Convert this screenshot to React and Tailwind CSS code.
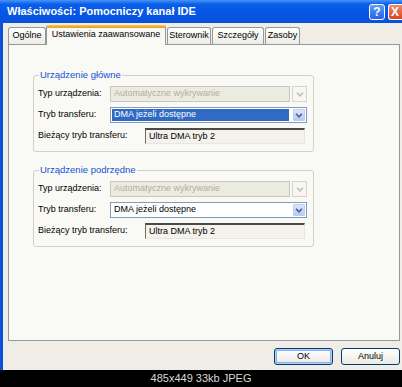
import React from "react";

const font = { fontFamily: '"Liberation Sans", Arial, sans-serif' };

function Chevron({ color }) {
  return (
    <svg width="8" height="5" viewBox="0 0 8 5">
      <path d="M1 0.8 L4 3.8 L7 0.8" fill="none" stroke={color} strokeWidth="1.6" />
    </svg>
  );
}

function DisabledSelect() {
  return (
    <div className="flex h-[16px] w-[197px] gap-[2px]">
      <div className="flex-1 border border-[#c9c7ba] bg-[#ecebe1] flex items-center pl-[3px] text-[9px] text-[#b1ae9f]">
        Automatyczne wykrywanie
      </div>
      <div className="w-[15px] border border-[#d6d4c8] bg-[#f7f6f2] flex items-center justify-center">
        <Chevron color="#c2c0b4" />
      </div>
    </div>
  );
}

function Select({ highlighted }) {
  return (
    <div className="flex h-[16px] w-[197px] border border-[#7f9db9] bg-white p-[1px] gap-[4px]">
      <div
        className={
          "flex-1 flex items-center pl-[2px] text-[9px] " +
          (highlighted ? "bg-[#316ac5] text-white" : "text-black")
        }
      >
        DMA jeżeli dostępne
      </div>
      <div className="w-[12px] rounded-[1px] border border-[#b9cdf4] bg-[linear-gradient(to_bottom,#dce7fc,#b3c9f5)] flex items-center justify-center">
        <Chevron color="#4d6185" />
      </div>
    </div>
  );
}

function ReadOnlyBox() {
  return (
    <div className="h-[16px] w-[160px] border-t-[2px] border-l border-t-[#4a4a4a] border-l-[#6a6a6a] border-b border-r border-b-[#e8e7df] border-r-[#e8e7df] bg-[#f3f2ec] flex items-center pl-[3px] text-[9px] text-black">
      Ultra DMA tryb 2
    </div>
  );
}

function Group({ title, highlighted }) {
  return (
    <div className="relative w-[281px] h-[77px] rounded-[3px] border border-[#d3d1c3] pt-[10px] pl-[4px] flex flex-col gap-[5px]">
      <span className="absolute left-[5px] top-[-7px] px-[1px] bg-[#f9f9f6] text-[9.5px] leading-[12px] text-[#1650d0]">
        {title}
      </span>
      <div className="flex items-center h-[16px]">
        <span className="w-[72px] text-[9px] text-black">Typ urządzenia:</span>
        <DisabledSelect />
      </div>
      <div className="flex items-center h-[16px]">
        <span className="w-[72px] text-[9px] text-black">Tryb transferu:</span>
        <Select highlighted={highlighted} />
      </div>
      <div className="flex items-center h-[16px]">
        <span className="w-[107px] text-[9px] text-black">Bieżący tryb transferu:</span>
        <ReadOnlyBox />
      </div>
    </div>
  );
}

function Tab({ label, width, selected }) {
  if (selected) {
    return (
      <div
        className="relative z-10 -mb-px h-[20px] border-x border-[#919b9c] rounded-t-[3px] bg-[#f9f9f6] flex flex-col"
        style={{ width }}
      >
        <div className="h-[3px] rounded-t-[2px] bg-[linear-gradient(to_bottom,#ffc83c,#e69a2c)]" />
        <div className="flex-1 flex items-center justify-center text-[9px] text-black pb-[3px]">{label}</div>
      </div>
    );
  }
  return (
    <div
      className="h-[17px] border-t border-x border-[#919b9c] rounded-t-[3px] bg-[linear-gradient(to_bottom,#ffffff,#ecebe5)] flex items-center justify-center text-[9px] text-black"
      style={{ width }}
    >
      {label}
    </div>
  );
}

export default function App() {
  return (
    <div className="w-[402px] h-[387px] bg-black flex flex-col overflow-hidden" style={font}>
      <div className="h-[370px] flex flex-col">
        {/* Title bar */}
        <div className="h-[23px] flex items-center bg-[linear-gradient(to_bottom,#4a93f8_0%,#0a60ea_18%,#0556e6_55%,#0a50d9_100%)] pl-[7px]">
          <span className="flex-1 text-[11px] font-bold text-white">Właściwości: Pomocniczy kanał IDE</span>
          <div className="w-[16px] h-[16px] rounded-[3px] border border-white bg-[linear-gradient(to_bottom,#5d9cf8,#2563e8)] flex items-center justify-center text-white text-[12px] font-bold leading-none">
            ?
          </div>
          <div className="ml-[3px] w-[14px] h-[16px] rounded-l-[3px] border-y border-l border-white bg-[linear-gradient(to_bottom,#f08a6a,#d9451f)] flex items-center pl-[2px] text-white text-[12px] font-bold leading-none">
            X
          </div>
        </div>
        {/* Body */}
        <div className="flex-1 border-l-[3px] border-[#0c4fd8] bg-[#efede6] pl-[5px] pr-[2px] flex flex-col">
          <div className="pt-[2px] flex items-end">
            <Tab label="Ogólne" width={38} />
            <Tab label="Ustawienia zaawansowane" width={120} selected />
            <div className="w-[1px]" />
            <Tab label="Sterownik" width={44} />
            <div className="w-[1px]" />
            <Tab label="Szczegóły" width={52} />
            <div className="w-[1px]" />
            <Tab label="Zasoby" width={35} />
          </div>
          <div className="h-[297px] border border-[#919b9c] bg-[#f9f9f6] pl-[24px] pt-[30px] flex flex-col gap-[18px]">
            <Group title="Urządzenie główne" highlighted />
            <Group title="Urządzenie podrzędne" />
          </div>
          <div className="mt-[7px] flex justify-end gap-[8px]">
            <div className="w-[59px] h-[17px] rounded-[3px] border border-[#003c74] bg-[linear-gradient(to_bottom,#ffffff,#eceae2)] shadow-[inset_0_0_0_1px_#b6cef7,inset_0_0_0_2px_#8cb1ee] flex items-center justify-center text-[9px] text-black">
              OK
            </div>
            <div className="w-[59px] h-[17px] rounded-[3px] border border-[#003c74] bg-[linear-gradient(to_bottom,#ffffff,#eceae2)] flex items-center justify-center text-[9px] text-black">
              Anuluj
            </div>
          </div>
        </div>
      </div>
      <div className="flex-1 flex items-center justify-center text-[11px] text-[#d8d8d8]">485x449 33kb JPEG</div>
    </div>
  );
}
